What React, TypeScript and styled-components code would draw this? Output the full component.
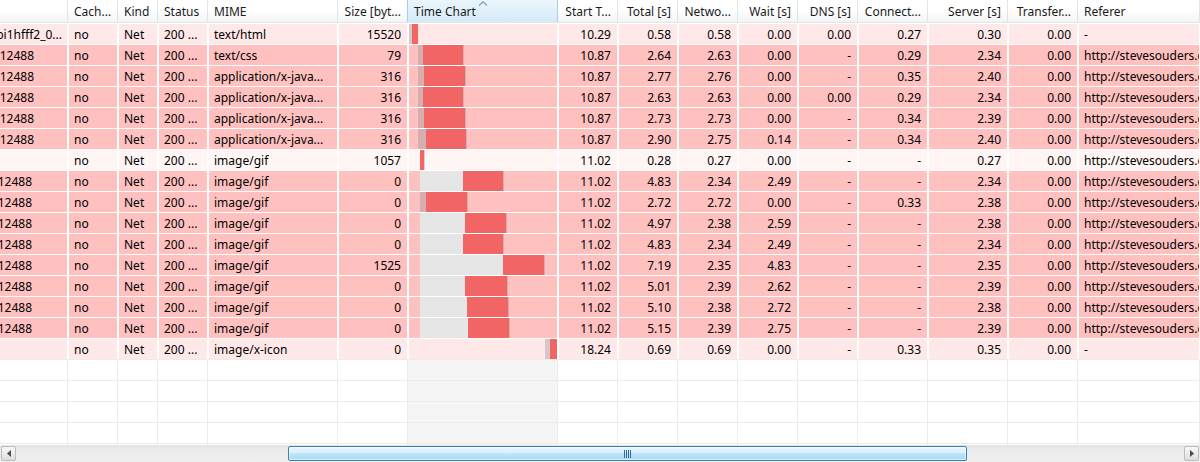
import React from 'react';
import styled, { createGlobalStyle } from 'styled-components';

const GlobalStyle = createGlobalStyle`
  html, body { margin: 0; padding: 0; background: #ffffff; }
  body {
    font-family: "Noto Sans", "Segoe UI", Arial, sans-serif;
    font-size: 12px;
    color: #000000;
    overflow: hidden;
  }
  * { box-sizing: border-box; }
`;

type Align = 'left' | 'right';
type Tone = 'light' | 'pink' | 'pale';
type SegKind = 'dark' | 'red' | 'gray';
type Seg = [number, number, SegKind];

interface Col {
  key: string;
  title: string;
  w?: number;
  align?: Align;
}

const COLS: Col[] = [
  { key: 'url', title: '', w: 68 },
  { key: 'cache', title: 'Cach...', w: 50 },
  { key: 'kind', title: 'Kind', w: 40 },
  { key: 'status', title: 'Status', w: 50 },
  { key: 'mime', title: 'MIME', w: 130 },
  { key: 'size', title: 'Size [byt...', w: 70, align: 'right' },
  { key: 'chart', title: 'Time Chart', w: 150 },
  { key: 'start', title: 'Start T...', w: 60, align: 'right' },
  { key: 'total', title: 'Total [s]', w: 60, align: 'right' },
  { key: 'network', title: 'Netwo...', w: 60, align: 'right' },
  { key: 'wait', title: 'Wait [s]', w: 60, align: 'right' },
  { key: 'dns', title: 'DNS [s]', w: 60, align: 'right' },
  { key: 'connect', title: 'Connect...', w: 70, align: 'right' },
  { key: 'server', title: 'Server [s]', w: 80, align: 'right' },
  { key: 'transfer', title: 'Transfer...', w: 70, align: 'right' },
  { key: 'referer', title: 'Referer' },
];

interface Entry {
  url: string;
  urlPad: number;
  mime: string;
  size: string;
  start: string;
  total: string;
  network: string;
  wait: string;
  dns: string;
  connect: string;
  server: string;
  referer: string;
  tone: Tone;
  bars: Seg[];
}

const REF = 'http://stevesouders.com/cuzillion/?c0=bi1hfff2_0_f';
const JS = 'application/x-java...';
const GIF = 'image/gif';
const RES = 'http://stevesouders.com/bin/resource.cgi?type=js&sleep=2&n=1&t=1212488';
const IMG = 'http://stevesouders.com/bin/resource.cgi?type=gif&sleep=2&n=3&t=1212488';

const ENTRIES: Entry[] = [
  { url: 'http://stevesouders.com/cuzillion/?c0=bi1hfff2_0...', urlPad: 5, mime: 'text/html', size: '15520', start: '10.29', total: '0.58', network: '0.58', wait: '0.00', dns: '0.00', connect: '0.27', server: '0.30', referer: '-', tone: 'light', bars: [[408, 412, 'dark'], [412, 418, 'red']] },
  { url: RES, urlPad: 33, mime: 'text/css', size: '79', start: '10.87', total: '2.64', network: '2.63', wait: '0.00', dns: '-', connect: '0.29', server: '2.34', referer: REF, tone: 'pink', bars: [[418, 423, 'dark'], [423, 463, 'red'], [463, 464, 'dark']] },
  { url: RES, urlPad: 33, mime: JS, size: '316', start: '10.87', total: '2.77', network: '2.76', wait: '0.00', dns: '-', connect: '0.35', server: '2.40', referer: REF, tone: 'pink', bars: [[418, 424, 'dark'], [424, 465, 'red'], [465, 466, 'dark']] },
  { url: RES, urlPad: 33, mime: JS, size: '316', start: '10.87', total: '2.63', network: '2.63', wait: '0.00', dns: '0.00', connect: '0.29', server: '2.34', referer: REF, tone: 'pink', bars: [[418, 423, 'dark'], [423, 463, 'red'], [463, 464, 'dark']] },
  { url: RES, urlPad: 33, mime: JS, size: '316', start: '10.87', total: '2.73', network: '2.73', wait: '0.00', dns: '-', connect: '0.34', server: '2.39', referer: REF, tone: 'pink', bars: [[418, 424, 'dark'], [424, 465, 'red'], [465, 466, 'dark']] },
  { url: RES, urlPad: 33, mime: JS, size: '316', start: '10.87', total: '2.90', network: '2.75', wait: '0.14', dns: '-', connect: '0.34', server: '2.40', referer: REF, tone: 'pink', bars: [[418, 426, 'dark'], [426, 466, 'red'], [466, 467, 'dark']] },
  { url: '', urlPad: 5, mime: GIF, size: '1057', start: '11.02', total: '0.28', network: '0.27', wait: '0.00', dns: '-', connect: '-', server: '0.27', referer: REF, tone: 'pale', bars: [[420, 424, 'red'], [424, 425, 'dark']] },
  { url: IMG, urlPad: 35, mime: GIF, size: '0', start: '11.02', total: '4.83', network: '2.34', wait: '2.49', dns: '-', connect: '-', server: '2.34', referer: REF, tone: 'pink', bars: [[420, 463, 'gray'], [463, 503, 'red'], [503, 504, 'dark']] },
  { url: IMG, urlPad: 35, mime: GIF, size: '0', start: '11.02', total: '2.72', network: '2.72', wait: '0.00', dns: '-', connect: '0.33', server: '2.38', referer: REF, tone: 'pink', bars: [[420, 426, 'dark'], [426, 467, 'red'], [467, 468, 'dark']] },
  { url: IMG, urlPad: 35, mime: GIF, size: '0', start: '11.02', total: '4.97', network: '2.38', wait: '2.59', dns: '-', connect: '-', server: '2.38', referer: REF, tone: 'pink', bars: [[420, 465, 'gray'], [465, 506, 'red'], [506, 507, 'dark']] },
  { url: IMG, urlPad: 35, mime: GIF, size: '0', start: '11.02', total: '4.83', network: '2.34', wait: '2.49', dns: '-', connect: '-', server: '2.34', referer: REF, tone: 'pink', bars: [[420, 463, 'gray'], [463, 503, 'red'], [503, 504, 'dark']] },
  { url: IMG, urlPad: 35, mime: GIF, size: '1525', start: '11.02', total: '7.19', network: '2.35', wait: '4.83', dns: '-', connect: '-', server: '2.35', referer: REF, tone: 'pink', bars: [[420, 503, 'gray'], [503, 544, 'red'], [544, 545, 'dark']] },
  { url: IMG, urlPad: 35, mime: GIF, size: '0', start: '11.02', total: '5.01', network: '2.39', wait: '2.62', dns: '-', connect: '-', server: '2.39', referer: REF, tone: 'pink', bars: [[420, 465, 'gray'], [465, 507, 'red'], [507, 508, 'dark']] },
  { url: IMG, urlPad: 35, mime: GIF, size: '0', start: '11.02', total: '5.10', network: '2.38', wait: '2.72', dns: '-', connect: '-', server: '2.38', referer: REF, tone: 'pink', bars: [[420, 467, 'gray'], [467, 508, 'red'], [508, 509, 'dark']] },
  { url: IMG, urlPad: 35, mime: GIF, size: '0', start: '11.02', total: '5.15', network: '2.39', wait: '2.75', dns: '-', connect: '-', server: '2.39', referer: REF, tone: 'pink', bars: [[420, 468, 'gray'], [468, 509, 'red'], [509, 510, 'dark']] },
  { url: '', urlPad: 5, mime: 'image/x-icon', size: '0', start: '18.24', total: '0.69', network: '0.69', wait: '0.00', dns: '-', connect: '0.33', server: '0.35', referer: '-', tone: 'light', bars: [[545, 550, 'dark'], [550, 557, 'red']] },
];

const TONES: Record<Tone, string> = {
  light: '#ffe8e8',
  pink: '#ffc0c0',
  pale: '#fff5f5',
};

const SEG_COLORS: Record<SegKind, string> = {
  red: '#f26565',
  gray: '#e6e6e6',
  dark: 'rgba(140, 140, 140, 0.35)',
};

const CHART_X0 = 409;
const CHART_W = 148;

/* ---------- layout ---------- */

const Grid = styled.div`
  width: 1200px;
  height: 462px;
  display: flex;
  flex-direction: column;
  overflow: hidden;
  background: #ffffff;
`;

const HeaderRow = styled.div`
  display: flex;
  height: 23px;
  flex: 0 0 23px;
  border-bottom: 1px solid #e3e4e6;
  background: linear-gradient(to bottom, #ffffff 0%, #ffffff 45%, #f3f4f5 100%);
`;

const HeaderCell = styled.div<{ $w?: number; $align?: Align; $active?: boolean; $edge?: boolean }>`
  position: relative;
  flex: ${(p) => (p.$w ? `0 0 ${p.$w}px` : '1 1 0')};
  min-width: 0;
  display: flex;
  align-items: center;
  justify-content: ${(p) => (p.$align === 'right' ? 'flex-end' : 'flex-start')};
  padding: 0 6px 0 6px;
  border-right: 1px solid ${(p) => (p.$active || p.$edge ? '#9fd0ef' : '#e3e4e6')};
  background: ${(p) =>
    p.$active ? 'linear-gradient(to bottom, #eaf6fd 0%, #e1f1fb 45%, #d5ebf8 100%)' : 'transparent'};
  color: #1b1b1b;
  white-space: nowrap;
  overflow: hidden;
`;

const SortArrow = styled.svg`
  position: absolute;
  top: 1px;
  left: 50%;
  transform: translateX(-50%);
`;

const Body = styled.div`
  flex: 1 1 auto;
  display: flex;
  flex-direction: column;
  overflow: hidden;
`;

const DataRow = styled.div<{ $tone: Tone }>`
  display: flex;
  height: 21px;
  flex: 0 0 21px;
  border-top: 1px solid #ffffff;
  background: ${(p) => TONES[p.$tone]};
`;

const Cell = styled.div<{ $w?: number; $align?: Align }>`
  flex: ${(p) => (p.$w ? `0 0 ${p.$w}px` : '1 1 0')};
  min-width: 0;
  display: flex;
  align-items: center;
  justify-content: ${(p) => (p.$align === 'right' ? 'flex-end' : 'flex-start')};
  padding: 0 6px 0 5px;
  border-left: 1px solid #ffffff;
  border-right: 1px solid #ffffff;
  white-space: nowrap;
  overflow: hidden;
`;

const UrlCell = styled.div<{ $w: number; $pad: number }>`
  flex: 0 0 ${(p) => p.$w}px;
  display: flex;
  align-items: center;
  justify-content: flex-end;
  padding-right: ${(p) => p.$pad}px;
  border-right: 1px solid #ffffff;
  white-space: nowrap;
  overflow: hidden;
`;

const UrlText = styled.span`
  flex: 0 0 auto;
`;

const ChartCell = styled.div<{ $w: number }>`
  flex: 0 0 ${(p) => p.$w}px;
  display: flex;
  align-items: stretch;
  border-left: 1px solid #ffffff;
  border-right: 1px solid #ffffff;
  overflow: hidden;
`;

const EmptyRow = styled.div<{ $h: number }>`
  display: flex;
  height: ${(p) => p.$h}px;
  flex: 0 0 ${(p) => p.$h}px;
  border-top: 1px solid #ececec;
`;

const EmptyCell = styled.div<{ $w?: number; $chart?: boolean }>`
  flex: ${(p) => (p.$w ? `0 0 ${p.$w}px` : '1 1 0')};
  border-right: 1px solid #ececec;
  background: ${(p) => (p.$chart ? '#f5f5f5' : 'transparent')};
`;

/* ---------- scrollbar ---------- */

const Scrollbar = styled.div`
  flex: 0 0 17px;
  height: 17px;
  display: flex;
  align-items: stretch;
  background: linear-gradient(to bottom, #e4e4e4 0%, #ebebeb 30%, #eeeeee 100%);
`;

const ArrowButton = styled.div`
  flex: 0 0 17px;
  display: flex;
  align-items: center;
  justify-content: center;
`;

const ArrowBox = styled.div`
  width: 15px;
  height: 15px;
  display: flex;
  align-items: center;
  justify-content: center;
  border: 1px solid #bdbdbd;
  border-radius: 2px;
  background: linear-gradient(to bottom, #f7f7f7 0%, #ececec 50%, #dddddd 100%);
`;

const TrackGap = styled.div<{ $w?: number }>`
  flex: ${(p) => (p.$w !== undefined ? `0 0 ${p.$w}px` : '1 1 0')};
`;

const Thumb = styled.div<{ $w: number }>`
  flex: 0 0 ${(p) => p.$w}px;
  margin: 1px 0;
  display: flex;
  align-items: center;
  justify-content: center;
  border: 1px solid #3c7fb1;
  border-radius: 2px;
  background: linear-gradient(to bottom, #eaf6fd 0%, #d9f0fc 45%, #bee6fd 50%, #a7d9f5 100%);
  box-shadow: inset 0 0 0 1px rgba(255, 255, 255, 0.55);
`;

/* ---------- parts ---------- */

function TimeChart({ bars }: { bars: Seg[] }) {
  return (
    <svg width={CHART_W} height={20} viewBox={`0 0 ${CHART_W} 20`} style={{ display: 'block' }}>
      {bars.map(([from, to, kind], i) => {
        const x = Math.max(0, from - CHART_X0);
        const w = Math.min(CHART_W, to - CHART_X0) - x;
        return <rect key={i} x={x} y={0} width={w} height={20} fill={SEG_COLORS[kind]} />;
      })}
    </svg>
  );
}

function Header() {
  return (
    <HeaderRow>
      {COLS.map((c, i) => (
        <HeaderCell
          key={c.key}
          $w={c.w}
          $align={c.align}
          $active={c.key === 'chart'}
          $edge={COLS[i + 1]?.key === 'chart'}
        >
          {c.title}
          {c.key === 'chart' && (
            <SortArrow width="9" height="5" viewBox="0 0 9 5">
              <polyline points="0.5,4.5 4.5,0.8 8.5,4.5" fill="none" stroke="#7c9dbd" strokeWidth="1.2" />
            </SortArrow>
          )}
        </HeaderCell>
      ))}
    </HeaderRow>
  );
}

function Row({ e }: { e: Entry }) {
  const values: Record<string, string> = {
    cache: 'no',
    kind: 'Net',
    status: '200 ...',
    mime: e.mime,
    size: e.size,
    start: e.start,
    total: e.total,
    network: e.network,
    wait: e.wait,
    dns: e.dns,
    connect: e.connect,
    server: e.server,
    transfer: '0.00',
    referer: e.referer,
  };
  return (
    <DataRow $tone={e.tone}>
      {COLS.map((c) => {
        if (c.key === 'url') {
          return (
            <UrlCell key={c.key} $w={c.w ?? 68} $pad={e.urlPad}>
              <UrlText>{e.url}</UrlText>
            </UrlCell>
          );
        }
        if (c.key === 'chart') {
          return (
            <ChartCell key={c.key} $w={c.w ?? 150}>
              <TimeChart bars={e.bars} />
            </ChartCell>
          );
        }
        return (
          <Cell key={c.key} $w={c.w} $align={c.align}>
            {values[c.key]}
          </Cell>
        );
      })}
    </DataRow>
  );
}

function Filler({ h }: { h: number }) {
  return (
    <EmptyRow $h={h}>
      {COLS.map((c) => (
        <EmptyCell key={c.key} $w={c.w} $chart={c.key === 'chart'} />
      ))}
    </EmptyRow>
  );
}

function HScrollbar() {
  return (
    <Scrollbar>
      <ArrowButton>
        <ArrowBox>
          <svg width="4" height="7" viewBox="0 0 4 7">
            <polygon points="4,0 0,3.5 4,7" fill="#4a4a4a" />
          </svg>
        </ArrowBox>
      </ArrowButton>
      <TrackGap $w={271} />
      <Thumb $w={679}>
        <svg width="8" height="8" viewBox="0 0 8 8">
          {[0, 2, 4, 6].map((x) => (
            <rect key={x} x={x} y={0} width={1} height={8} fill="#2d6a9b" />
          ))}
        </svg>
      </Thumb>
      <TrackGap />
      <ArrowButton>
        <ArrowBox>
          <svg width="4" height="7" viewBox="0 0 4 7">
            <polygon points="0,0 4,3.5 0,7" fill="#4a4a4a" />
          </svg>
        </ArrowBox>
      </ArrowButton>
    </Scrollbar>
  );
}

export default function App() {
  return (
    <>
      <GlobalStyle />
      <Grid>
        <Header />
        <Body>
          {ENTRIES.map((e, i) => (
            <Row key={i} e={e} />
          ))}
          <Filler h={21} />
          <Filler h={21} />
          <Filler h={21} />
          <Filler h={21} />
          <Filler h={2} />
        </Body>
        <HScrollbar />
      </Grid>
    </>
  );
}
